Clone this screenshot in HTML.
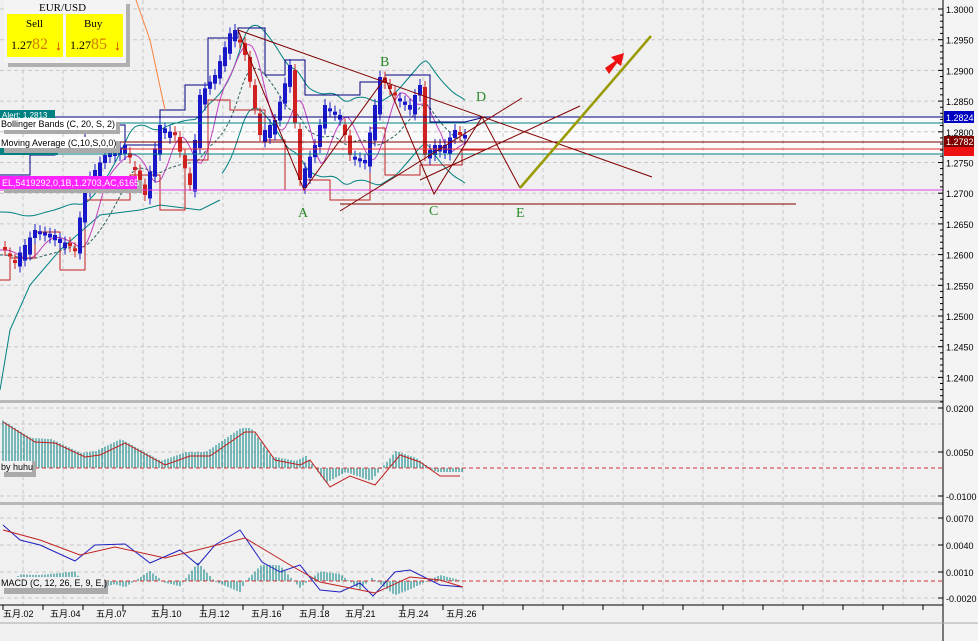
<!DOCTYPE html>
<html><head><meta charset="utf-8"><style>
html,body{margin:0;padding:0;background:#f0f0f0;overflow:hidden}
svg{display:block}
</style></head><body>
<svg id="s" width="978" height="641" xmlns="http://www.w3.org/2000/svg" font-family="Liberation Sans, Noto Sans CJK SC, sans-serif">
<rect width="978" height="641" fill="#f0f0f0"/>
<rect x="0" y="117" width="943" height="37" fill="#fafafa"/>
<g id="grid" stroke="#c8c8c8" stroke-dasharray="4,3" stroke-width="1"></g>
<g id="bb" fill="none" stroke-width="1"></g>
<g id="cd"></g>
<line x1="0" y1="117" x2="943" y2="117" stroke="#000080"/>
<line x1="0" y1="123" x2="943" y2="123" stroke="#008080"/>
<line x1="0" y1="142" x2="943" y2="142" stroke="#800000"/>
<line x1="0" y1="149" x2="943" y2="149" stroke="#e03030"/>
<line x1="0" y1="154" x2="943" y2="154" stroke="#008080"/>
<line x1="0" y1="190" x2="943" y2="190" stroke="#e040e0"/>
<line x1="340" y1="204" x2="796" y2="204" stroke="#800000"/>
<g stroke="#800000" fill="none" stroke-width="1">
<line x1="238" y1="30" x2="652" y2="177"/>
<line x1="340" y1="211" x2="522" y2="98"/>
<line x1="420" y1="180" x2="580" y2="106"/>
<polyline points="238,30 304,190 385,78 434,194 482,117 520,188"/>
</g>
<polyline points="136,0 150,40 165,110" stroke="#ff8040" fill="none"/>
<line x1="520" y1="188" x2="651" y2="36" stroke="#999900" stroke-width="2.5"/>
<polygon points="605,68 615,61 611,57 624,53 621,66 617,63 609,74" fill="#ee1111"/>
<g font-family="Liberation Serif, serif" font-size="14" fill="#2a8a2a">
<text x="298" y="217">A</text><text x="380" y="66">B</text><text x="429" y="215">C</text><text x="476" y="101">D</text><text x="516" y="217">E</text></g>
<rect x="0" y="400" width="943" height="3" fill="#b8b8b8"/>
<rect x="0" y="502" width="943" height="3" fill="#b8b8b8"/>
<g id="ind"></g>
<line x1="0" y1="468" x2="943" y2="468" stroke="#d03030" stroke-dasharray="4,3"/>
<line x1="0" y1="581" x2="943" y2="581" stroke="#d03030" stroke-dasharray="4,3"/>
<rect x="944" y="0" width="34" height="641" fill="#f4f4f4"/>
<line x1="943" y1="0" x2="943" y2="641" stroke="#000"/>
<line x1="0" y1="605" x2="943" y2="605" stroke="#000"/>
<line x1="0" y1="623" x2="978" y2="623" stroke="#aaa"/>
<g id="ax" font-size="9" fill="#000"></g>
<rect x="944" y="111" width="30" height="12" fill="#0000c0"/><text x="946" y="121" font-size="9" fill="#fff">1.2824</text>
<rect x="944" y="136" width="30" height="11" fill="#800000"/><text x="946" y="145" font-size="9" fill="#fff">1.2782</text>
<rect x="944" y="147" width="30" height="9" fill="#ee1111"/>
<rect x="0" y="110" width="55" height="9" fill="#008080"/><text x="2" y="118" font-size="8" fill="#fff">Alert: 1.2813</text>
<rect x="4" y="122" width="116" height="12" fill="#aaa"/>
<rect x="0" y="118" width="116" height="12" fill="#fff"/><text x="1" y="127" font-size="9">Bollinger Bands (C, 20, S, 2)</text>
<rect x="0" y="148" width="58" height="7" fill="#008080"/>
<rect x="4" y="141" width="116" height="12" fill="#aaa"/>
<rect x="0" y="137" width="116" height="11" fill="#fff"/><text x="1" y="146" font-size="9">Moving Average (C,10,S,0,0)</text>
<rect x="4" y="180" width="138" height="13" fill="#aaa"/>
<rect x="0" y="176" width="137" height="13" fill="#ff22ff"/><text x="2" y="186" font-size="9" fill="#fff">EL,5419292,0,1B,1.2703,AC,6165</text>
<rect x="4" y="461" width="32" height="16" fill="#aaa"/><rect x="0" y="461" width="32" height="11" fill="#f0f0f0"/><text x="1" y="470" font-size="9">by huhu</text>
<rect x="4" y="580" width="104" height="14" fill="#aaa"/><rect x="0" y="577" width="104" height="11" fill="#f0f0f0"/><text x="1" y="586" font-size="9">MACD (C, 12, 26, E, 9, E,)</text>
<rect x="8" y="4" width="122" height="63" fill="#b0b0b0"/>
<rect x="4" y="0" width="122" height="63" fill="#f4f4f4"/>
<g font-family="Liberation Serif, serif">
<text x="39" y="11" font-size="11">EUR/USD</text>
<rect x="7" y="14" width="56" height="43" fill="#ffff00"/>
<rect x="66" y="14" width="57" height="43" fill="#ffff00"/>
<text x="26" y="27" font-size="11">Sell</text>
<text x="84" y="27" font-size="11">Buy</text>
<text x="11" y="49" font-size="12">1.27<tspan font-size="16" fill="#d08000">82</tspan></text>
<text x="70" y="49" font-size="12">1.27<tspan font-size="16" fill="#d08000">85</tspan></text>
</g>
<text x="55" y="50" font-size="14" fill="#d02000">↓</text>
<text x="114" y="50" font-size="14" fill="#d02000">↓</text>
<g font-size="9" fill="#000">
<text x="3" y="617">五月.02</text><text x="50" y="617">五月.04</text><text x="96" y="617">五月.07</text><text x="151" y="617">五月.10</text><text x="199" y="617">五月.12</text><text x="251" y="617">五月.16</text><text x="299" y="617">五月.18</text><text x="345" y="617">五月.21</text><text x="398" y="617">五月.24</text><text x="446" y="617">五月.26</text>
</g>
</svg>
<script>
(function(){
const NS="http://www.w3.org/2000/svg";
function el(p,t,a){const e=document.createElementNS(NS,t);for(const k in a)e.setAttribute(k,String(a[k]));document.getElementById(p).appendChild(e);return e;}
function pts(P){return P.map(function(p){return p[0].toFixed(1)+","+p[1].toFixed(1);}).join(" ");}
function interp(P,x){if(x<=P[0][0])return P[0][1];for(let i=0;i<P.length-1;i++){if(x<=P[i+1][0]){const t=(x-P[i][0])/(P[i+1][0]-P[i][0]);return P[i][1]+t*(P[i+1][1]-P[i][1]);}}return P[P.length-1][1];}
for(let gx=23;gx<943;gx+=40)el("grid","line",{x1:gx,y1:0,x2:gx,y2:605});
for(let i=0;i<13;i++){const gy=9+i*30.7;el("grid","line",{x1:0,y1:gy,x2:943,y2:gy});}
[408,424,452,496,518,545,572,598].forEach(function(gy){el("grid","line",{x1:0,y1:gy,x2:943,y2:gy});});
const pl=["1.3000","1.2950","1.2900","1.2850","1.2800","1.2750","1.2700","1.2650","1.2600","1.2550","1.2500","1.2450","1.2400"];
pl.forEach(function(t,i){const ly=9+i*30.7;el("ax","line",{x1:938,y1:ly,x2:943,y2:ly,stroke:"#000"});el("ax","text",{x:946,y:ly+4}).textContent=t;
for(let j=1;j<5;j++)el("ax","line",{x1:940,y1:ly+j*6.1,x2:943,y2:ly+j*6.1,stroke:"#000"});});
[["0.0200",408],["0.0050",452],["-0.0100",496],["0.0070",518],["0.0040",545],["0.0010",572],["-0.0020",598]].forEach(function(a){el("ax","line",{x1:938,y1:a[1],x2:943,y2:a[1],stroke:"#000"});el("ax","text",{x:946,y:a[1]+4}).textContent=a[0];});
for(let tx=3;tx<943;tx+=40)el("ax","line",{x1:tx,y1:605,x2:tx,y2:610,stroke:"#000"});
const K=[[5,250],[20,265],[40,235],[60,240],[80,255],[90,190],[110,160],[130,150],[150,200],[165,130],[180,140],[195,190],[205,100],[220,80],[238,30],[250,60],[265,140],[280,125],[295,70],[305,185],[320,150],[330,110],[345,120],[355,160],[370,165],[380,110],[385,82],[400,100],[415,110],[425,90],[430,160],[440,150],[450,150],[460,135],[465,140]];
for(let cx=5;cx<=465;cx+=5){
  const o=interp(K,cx)+(((cx*3)%7)-3)*1.5, cl=interp(K,cx+5)+(((cx*7)%5)-2)*2.5;
  const isUp=cl<o; let tp=Math.min(o,cl), bt=Math.max(o,cl); if(bt-tp<3)bt=tp+3;
  const col=isUp?"#1818c8":"#d02020";
  el("cd","line",{x1:cx,y1:tp-6,x2:cx,y2:bt+6,stroke:col});
  el("cd","rect",{x:cx-2,y:tp,width:4,height:bt-tp,fill:col});
}
const ma=[],ub=[],lb=[],ma2=[];
for(let mx=0;mx<=465;mx+=3){let s=0,n=0;for(let k=-45;k<=0;k+=3){s+=interp(K,mx+k);n++;}const m=s/n;ma.push([mx,m]);
 let s2=0,n2=0;for(let k=-20;k<=0;k+=2){s2+=interp(K,mx+k);n2++;}ma2.push([mx,s2/n2]);
 ub.push([mx,m-38]);lb.push([mx,m+45]);}
const LB=[[0,390],[10,330],[30,285],[60,250],[100,215],[140,210],[160,205],[200,210],[220,200]];
el("bb","polyline",{points:pts(LB),stroke:"#008080"});
el("bb","polyline",{points:pts(ub),stroke:"#008080"});
el("bb","polyline",{points:pts(lb.filter(function(p){return p[0]>=220;})),stroke:"#008080"});
el("bb","polyline",{points:pts(ma2),stroke:"#c040c0"});
el("bb","polyline",{points:pts(ma.map(function(p){return [p[0],p[1]+5];})),stroke:"#306060","stroke-dasharray":"3,2"});
const nv=[[0,175],[30,175],[30,155],[55,155],[55,145],[85,145],[85,125],[125,125],[125,145],[160,145],[160,110],[185,110],[185,85],[208,85],[208,38],[238,38],[238,28],[265,28],[265,75],[285,75],[285,60],[305,60],[305,95],[360,95],[360,82],[385,82],[385,75],[430,75],[430,122],[465,122],[485,117]];
const rd=[[0,280],[10,280],[10,258],[35,258],[35,232],[60,232],[60,270],[85,270],[85,200],[130,200],[130,175],[160,175],[160,210],[185,210],[185,160],[208,160],[208,100],[230,100],[230,110],[265,110],[265,140],[285,140],[285,190],[305,190],[305,180],[330,180],[330,200],[370,200],[370,128],[385,128],[385,175],[420,175],[420,165],[462,165],[462,150],[485,150]];
el("bb","polyline",{points:pts(nv),stroke:"#000080"});
el("bb","polyline",{points:pts(rd),stroke:"#c02020"});
const r1=[[3,422],[35,442],[55,443],[85,457],[100,455],[125,443],[165,465],[190,456],[210,456],[245,432],[255,432],[275,460],[300,465],[310,460],[330,487],[350,476],[375,485],[400,455],[420,462],[440,476],[460,476]];
for(let hx=3;hx<=463;hx+=3){const hy=interp(r1,hx+4)-4;el("ind","line",{x1:hx,y1:468,x2:hx,y2:hy,stroke:"#008080"});}
el("ind","polyline",{points:pts(r1),stroke:"#c02020",fill:"none"});
const bl=[[3,525],[20,540],[40,545],[75,561],[95,545],[125,544],[150,563],[180,550],[198,565],[215,545],[240,530],[262,562],[280,572],[300,565],[320,590],[340,592],[360,583],[373,596],[395,572],[410,570],[440,585],[463,587]];
const rl=[[3,530],[40,540],[80,555],[115,547],[165,558],[245,538],[290,565],[320,582],[375,593],[410,577],[440,580],[463,587]];
for(let hx=3;hx<=463;hx+=3){const h=(interp(rl,hx)-interp(bl,hx))*1.2;el("ind","line",{x1:hx,y1:581,x2:hx,y2:581+h,stroke:"#008080"});}
el("ind","polyline",{points:pts(bl),stroke:"#2020c0",fill:"none"});
el("ind","polyline",{points:pts(rl),stroke:"#c02020",fill:"none"});
})();
</script>
</body></html>
